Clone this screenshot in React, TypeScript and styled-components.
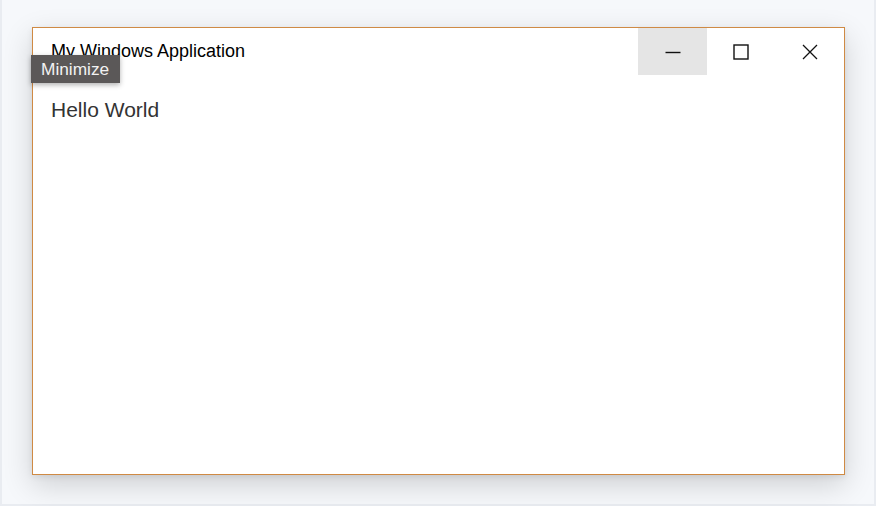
import * as React from "react";
import styled, { createGlobalStyle } from "styled-components";

const GlobalStyle = createGlobalStyle`
  html, body {
    margin: 0;
    padding: 0;
    background: #ffffff;
  }
  body {
    font-family: "Liberation Sans", Arial, sans-serif;
  }
`;

const Stage = styled.div`
  box-sizing: border-box;
  width: 876px;
  height: 506px;
  padding: 27px 0 0 30px;
  background: #f6f8fb;
  border-left: 2px solid #e9ecf1;
  border-right: 2px solid #e9ecf1;
  border-bottom: 2px solid #e9ecf1;
`;

const Window = styled.div`
  position: relative;
  box-sizing: border-box;
  width: 813px;
  height: 448px;
  background: #ffffff;
  border: 1px solid #cf8a44;
  box-shadow: 0 10px 28px rgba(0, 0, 0, 0.16), 0 2px 6px rgba(0, 0, 0, 0.08);
  display: flex;
  flex-direction: column;
`;

const TitleBar = styled.div`
  display: flex;
  align-items: center;
  height: 47px;
  padding-left: 18px;
`;

const Title = styled.div`
  flex: 1;
  font-size: 18px;
  color: #000000;
`;

const Controls = styled.div`
  display: flex;
  height: 100%;
`;

const ControlButton = styled.div<{ $hover?: boolean; $width: number }>`
  width: ${(p) => p.$width}px;
  height: 100%;
  display: flex;
  align-items: center;
  justify-content: center;
  background: ${(p) => (p.$hover ? "#e5e5e5" : "transparent")};
  color: #111111;
`;

const Content = styled.div`
  padding: 23px 18px;
  font-size: 21px;
  color: #333333;
`;

const Tooltip = styled.div`
  position: absolute;
  left: -2px;
  top: 27px;
  box-sizing: border-box;
  width: 89px;
  height: 28px;
  padding-left: 10px;
  display: flex;
  align-items: center;
  background: #5b5858;
  color: #f2f2f2;
  font-size: 17.3px;
  box-shadow: 0 2px 5px rgba(0, 0, 0, 0.3);
`;

const MinimizeIcon = () => (
  <svg width="16" height="16" viewBox="0 0 16 16">
    <line x1="0.5" y1="8.5" x2="15.5" y2="8.5" stroke="currentColor" strokeWidth="1.4" />
  </svg>
);

const MaximizeIcon = () => (
  <svg width="16" height="16" viewBox="0 0 16 16">
    <rect x="1" y="1" width="14" height="14" fill="none" stroke="currentColor" strokeWidth="1.4" />
  </svg>
);

const CloseIcon = () => (
  <svg width="16" height="16" viewBox="0 0 16 16">
    <path d="M1 1 L15 15 M15 1 L1 15" stroke="currentColor" strokeWidth="1.3" fill="none" />
  </svg>
);

const App: React.FC = () => {
  return (
    <>
      <GlobalStyle />
      <Stage>
        <Window>
          <TitleBar>
            <Title>My Windows Application</Title>
            <Controls>
              <ControlButton $hover $width={69}>
                <MinimizeIcon />
              </ControlButton>
              <ControlButton $width={68}>
                <MaximizeIcon />
              </ControlButton>
              <ControlButton $width={69}>
                <CloseIcon />
              </ControlButton>
            </Controls>
          </TitleBar>
          <Content>Hello World</Content>
          <Tooltip>Minimize</Tooltip>
        </Window>
      </Stage>
    </>
  );
};

export default App;
